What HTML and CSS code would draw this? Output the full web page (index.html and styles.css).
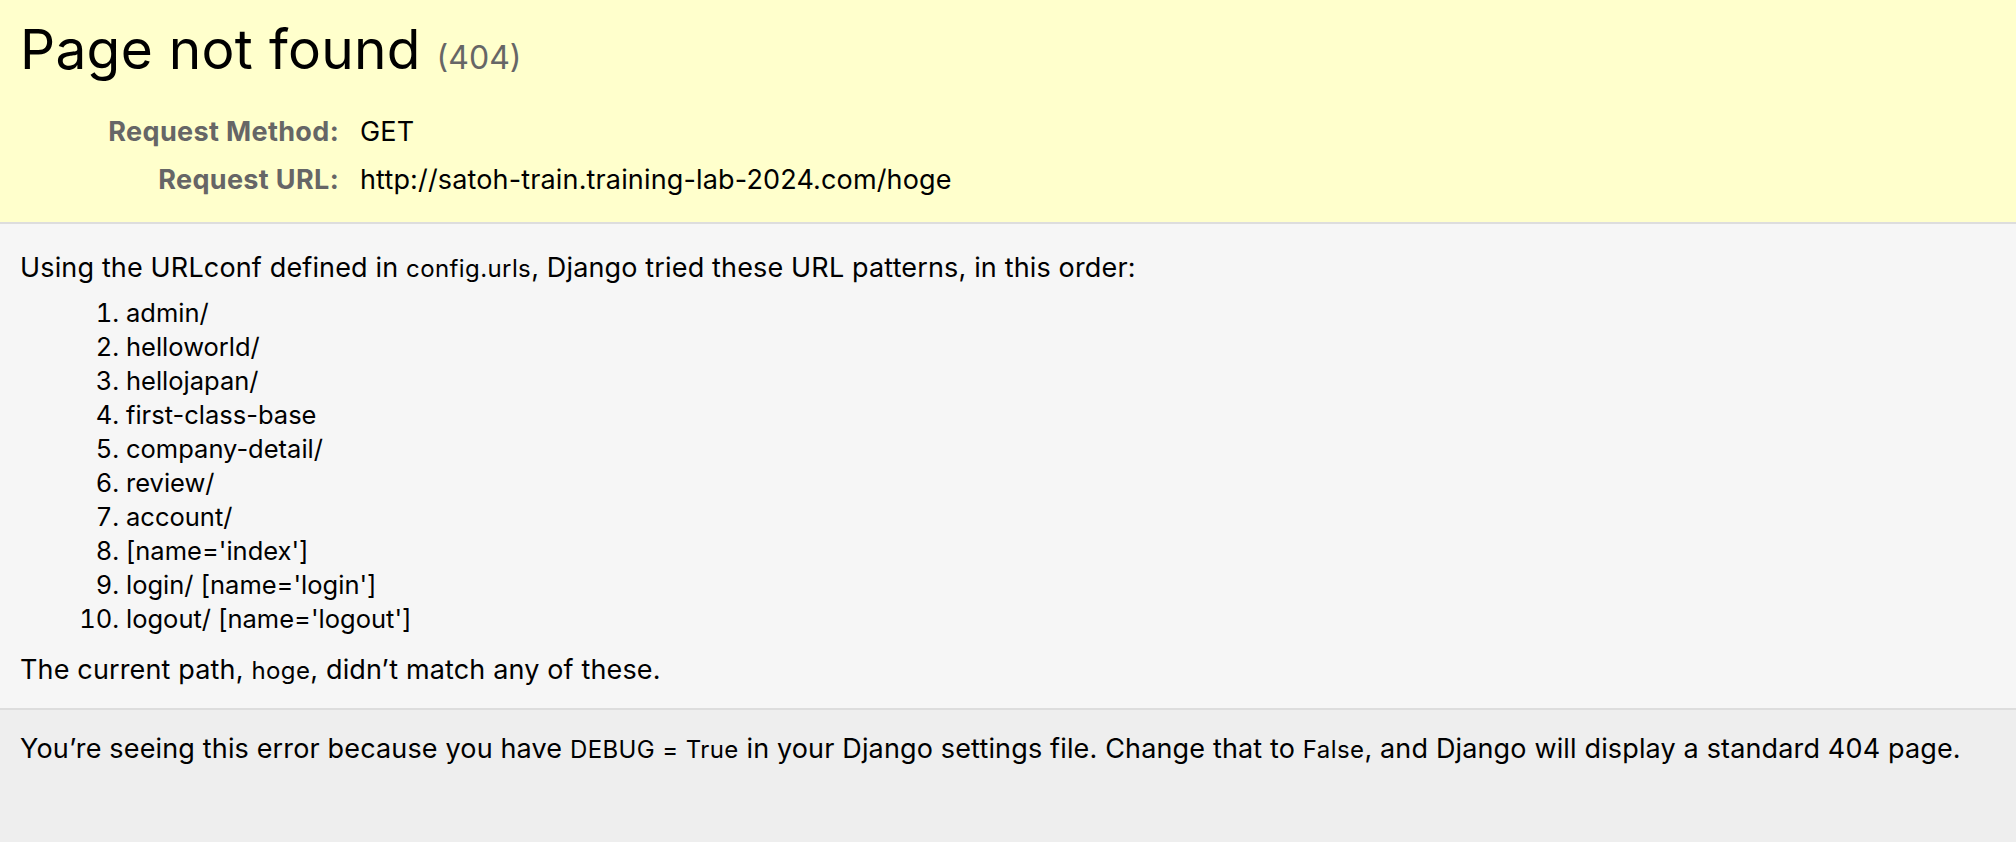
FILE: index.html
```html
<!DOCTYPE html>
<html lang="en">
<head>
<meta charset="utf-8">
<title>Page not found at /hoge</title>
<link rel="stylesheet" href="styles.css">
</head>
<body>
<div class="summary">
  <h1 class="title">Page not found <span class="status">(404)</span></h1>
  <table class="meta">
    <tr><th>Request Method:</th><td>GET</td></tr>
    <tr><th>Request URL:</th><td>http://satoh-train.training-lab-2024.com/hoge</td></tr>
  </table>
</div>
<div class="info">
  <p class="text">Using the URLconf defined in <code class="code">config.urls</code>, Django tried these URL patterns, in this order:</p>
  <ol class="patterns">
    <li>admin/</li>
    <li>helloworld/</li>
    <li>hellojapan/</li>
    <li>first-class-base</li>
    <li>company-detail/</li>
    <li>review/</li>
    <li>account/</li>
    <li>[name='index']</li>
    <li>login/ [name='login']</li>
    <li>logout/ [name='logout']</li>
  </ol>
  <p class="text">The current path, <code class="code">hoge</code>, didn’t match any of these.</p>
</div>
<div class="explanation">
  <p class="text">You’re seeing this error because you have <code class="code">DEBUG = True</code> in your Django settings file. Change that to <code class="code">False</code>, and Django will display a standard 404 page.</p>
</div>
</body>
</html>
```

FILE: styles.css
```css
html, body {
  margin: 0;
  padding: 0;
}
body {
  font-family: Inter, "Liberation Sans", Arial, sans-serif;
  font-size: 27px;
  letter-spacing: 0.15px;
  color: #000;
  background: #eee;
  min-height: 100vh;
}
.summary {
  background: #ffc;
  border-bottom: 2px solid #ddd;
  padding: 17px 20px 16px;
  height: 189px;
}
.title {
  margin: 0 0 18px;
  font-weight: normal;
  font-size: 55px;
  letter-spacing: 0.3px;
  line-height: 64px;
}
.status {
  font-size: 32px;
  letter-spacing: 0;
  color: #666;
}
.meta {
  border-collapse: collapse;
  border: none;
}
.meta th, .meta td {
  vertical-align: top;
  padding: 2px 3px;
  line-height: 44px;
  font-size: 27px;
}
.meta th {
  width: 316px;
  text-align: right;
  color: #666;
  font-weight: 700;
  letter-spacing: 0.35px;
  padding-right: 18px;
}
.info {
  background: #f6f6f6;
  border-bottom: 2px solid #ddd;
  padding: 27px 20px 20px;
}
.text {
  margin: 0;
  line-height: 34px;
}
.code {
  font-family: Inter, "Liberation Sans", Arial, sans-serif;
  font-size: 24px;
  letter-spacing: 0.4px;
}
.patterns {
  margin: 10px 0 17px;
  padding-left: 106px;
  line-height: 34px;
  font-size: 25.5px;
  letter-spacing: 0;
}
.explanation {
  padding: 22px 20px;
}
```
